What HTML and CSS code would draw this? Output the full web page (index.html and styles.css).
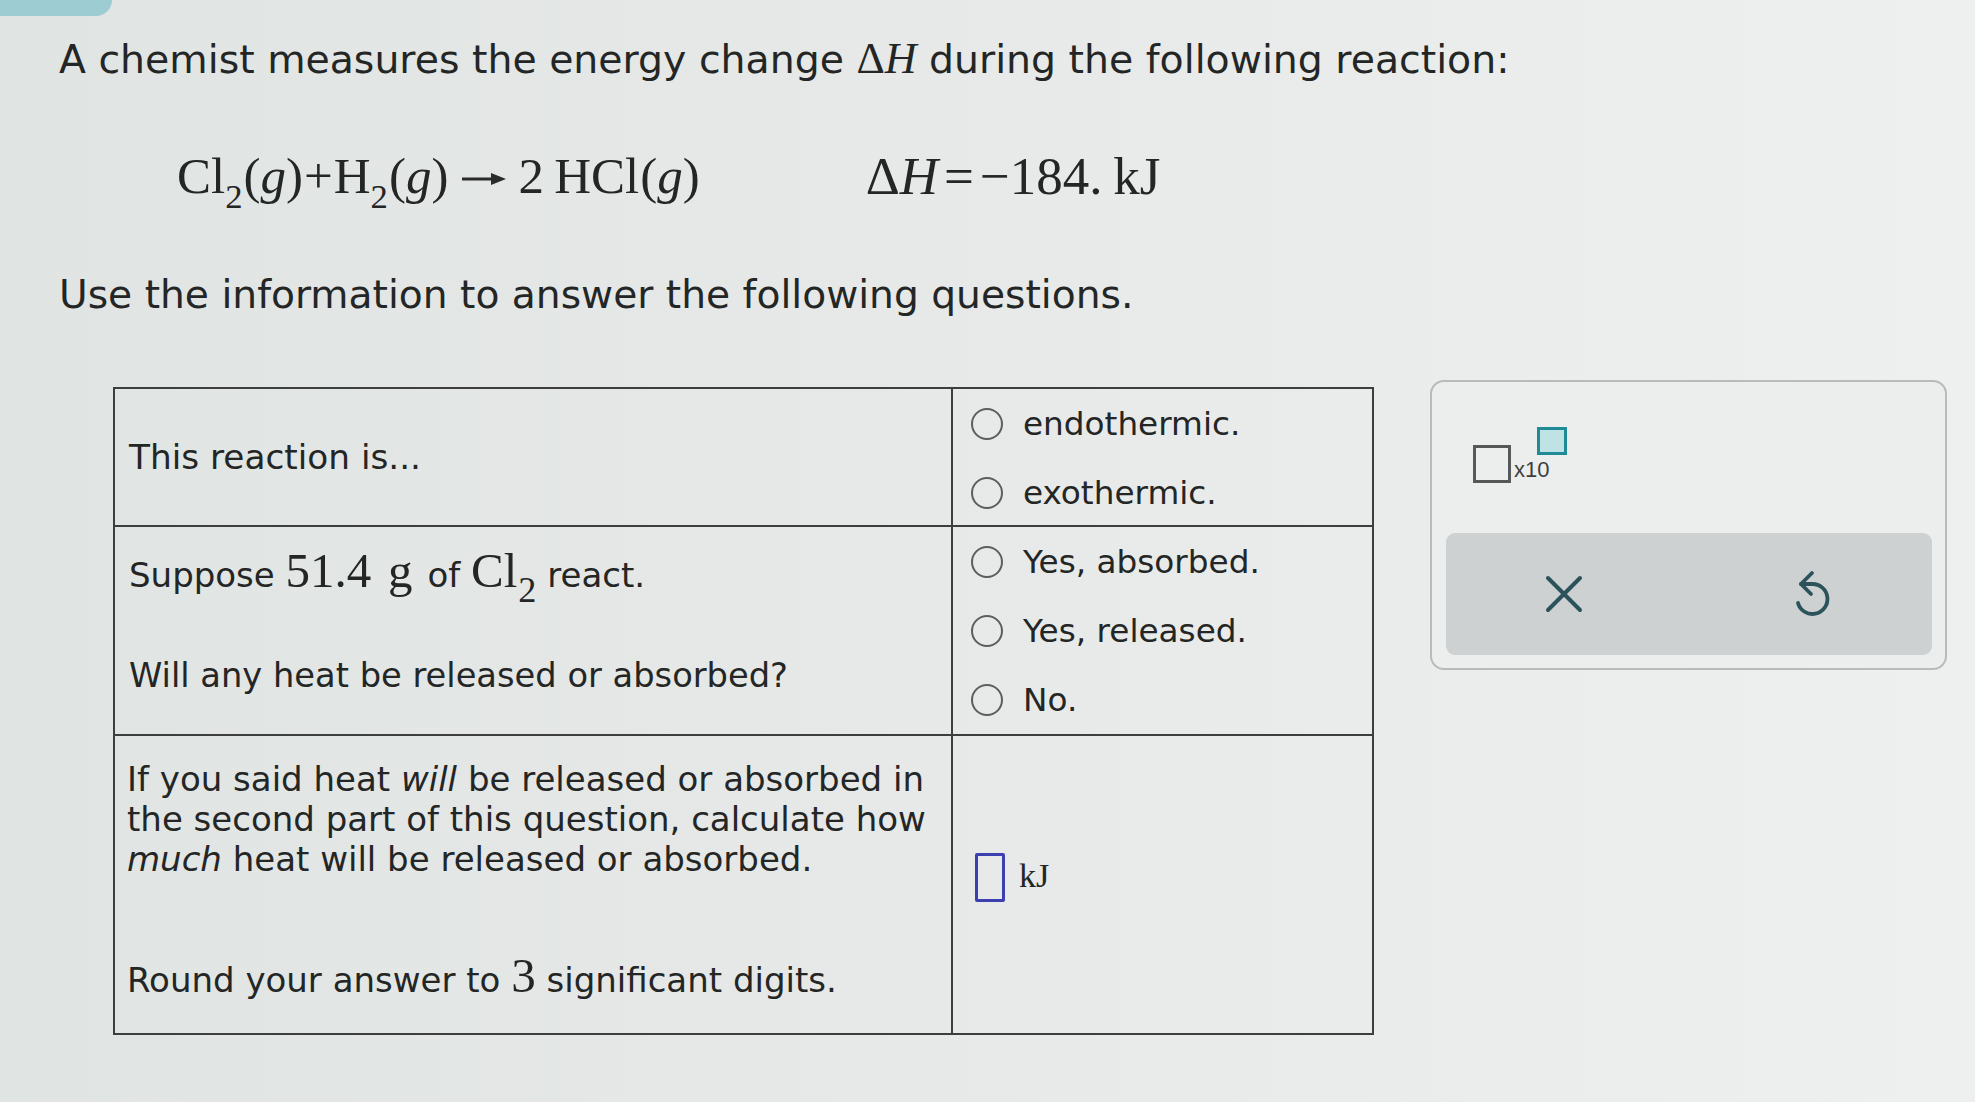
FILE: index.html
```html
<!DOCTYPE html>
<html>
<head>
<meta charset="utf-8">
<link rel="stylesheet" href="styles.css">
</head>
<body>
<div class="tab"></div>
<main class="question">
  <p class="lead">A chemist measures the energy change <span class="math"><span class="up">Δ</span><i>H</i></span> during the following reaction:</p>
  <div class="equation">
    <span class="eq-left">Cl<sub>2</sub><span class="ph">(<i>g</i>)</span><span class="plus">+</span>H<sub>2</sub><span class="ph">(<i>g</i>)</span><svg class="arrow" width="44" height="14" viewBox="0 0 44 14"><line x1="0" y1="7" x2="33" y2="7" stroke="#2a2a2a" stroke-width="3"/><polygon points="29,1 44,7 29,13" fill="#2a2a2a"/></svg>2&#8201;HCl<span class="ph">(<i>g</i>)</span></span>
    <span class="eq-right">Δ<i>H</i><span class="eqsign">=</span>−184.&#8201;kJ</span>
  </div>
  <p class="lead instr">Use the information to answer the following questions.</p>

  <div class="work">
    <div class="grid">
      <div class="cell c1 mid">This reaction is...</div>
      <div class="cell c2">
        <div class="opt"><span class="radio"></span>endothermic.</div>
        <div class="opt"><span class="radio"></span>exothermic.</div>
      </div>
      <div class="cell c1 r2">
        <div class="l-suppose">Suppose <span class="sm">51.4</span> <span class="sm unit-g">g</span> of <span class="sm">Cl<sub>2</sub></span> react.</div>
        <div class="l-will">Will any heat be released or absorbed?</div>
      </div>
      <div class="cell c2">
        <div class="opt"><span class="radio"></span>Yes, absorbed.</div>
        <div class="opt"><span class="radio"></span>Yes, released.</div>
        <div class="opt"><span class="radio"></span>No.</div>
      </div>
      <div class="cell c1 r3">
        <div class="para">
          <div class="ln">If you said heat <i>will</i> be released or absorbed in</div>
          <div class="ln">the second part of this question, calculate how</div>
          <div class="ln"><i>much</i> heat will be released or absorbed.</div>
        </div>
        <div class="round">Round your answer to <span class="sm">3</span> significant digits.</div>
      </div>
      <div class="cell c2 r3b">
        <span class="answer"></span><span class="unit">kJ</span>
      </div>
    </div>

    <aside class="panel">
      <div class="sci">
        <span class="base"></span><span class="x10">x10</span><span class="expo"></span>
      </div>
      <div class="bar">
        <div class="btn">
          <svg class="ico-x" width="38" height="38" viewBox="0 0 38 38"><path d="M3 3 L35 35 M35 3 L3 35" stroke="#2c525b" stroke-width="4" fill="none" stroke-linecap="round"/></svg>
        </div>
        <div class="btn">
          <svg class="ico-undo" width="40" height="48" viewBox="0 0 40 48"><path d="M8 14 L19 14 A15 15 0 1 1 5 33" stroke="#2c525b" stroke-width="3.8" fill="none" stroke-linecap="round"/><path d="M19 3 L8 14 L18 24" stroke="#2c525b" stroke-width="3.8" fill="none" stroke-linecap="round" stroke-linejoin="round"/></svg>
        </div>
      </div>
    </aside>
  </div>
</main>
</body>
</html>
```

FILE: styles.css
```css
* { box-sizing: border-box; }
html, body { margin: 0; padding: 0; }
body {
  width: 1975px;
  height: 1102px;
  overflow: hidden;
  background: linear-gradient(90deg, #e0e4e2 0%, #e6e9e7 45%, #eef0ef 100%);
  font-family: "DejaVu Sans", Verdana, sans-serif;
  color: #242626;
}
.tab {
  width: 112px;
  height: 16px;
  background: #9dcdd3;
  border-radius: 0 0 24px 0;
}
.question { padding-left: 59px; }
.lead {
  margin: 20px 0 0 0;
  font-size: 39.4px;
  line-height: 46px;
  white-space: nowrap;
}
.math { font-family: "Liberation Serif", "Times New Roman", serif; font-size: 44px; }
.math i { font-style: italic; }
.equation {
  margin-top: 64px;
  height: 60px;
  display: flex;
  align-items: center;
  padding-left: 118px;
  font-family: "Liberation Serif", "Times New Roman", serif;
  font-size: 51px;
  line-height: 60px;
  white-space: nowrap;
}
.equation sub, .sm sub { font-size: 0.68em; vertical-align: -0.42em; line-height: 0; }
.sm sub { font-size: 0.74em; margin-left: 1px; }
.equation i { font-style: italic; }
.ph { margin-left: 1px; }
.plus { margin: 0 1px; }
.arrow { margin: 0 12px 0 14px; vertical-align: middle; position: relative; top: -2px; }
.eq-right { margin-left: 166px; font-size: 53px; }
.eqsign { margin: 0 6px; }
.instr { margin-top: 66px; font-size: 39.2px; }

.work {
  margin-top: 62px;
  display: flex;
  align-items: flex-start;
}
.grid {
  margin-left: 54px;
  margin-top: 7px;
  display: grid;
  grid-template-columns: 838px 421px;
  grid-template-rows: 138px 209px 299px;
  border-top: 2px solid #3d3f3f;
  border-left: 2px solid #3d3f3f;
}
.cell {
  border-right: 2px solid #3d3f3f;
  border-bottom: 2px solid #3d3f3f;
}
.c1 {
  padding-left: 14px;
  font-size: 34px;
  white-space: nowrap;
}
.c1.mid { display: flex; align-items: center; line-height: 40px; font-size: 34.3px; }
.r2 { padding-top: 19px; }
.l-suppose { line-height: 50px; }
.sm { font-family: "Liberation Serif", "Times New Roman", serif; font-size: 49px; line-height: 1; }
.unit-g { margin-left: 6px; margin-right: 4px; }
.l-will { margin-top: 56px; line-height: 40px; font-size: 33.7px; }
.r3 { padding-top: 23px; padding-left: 12px; }
.para { line-height: 40px; }
.ln { height: 32px; line-height: 40px; margin-bottom: 0; }
.ln + .ln { margin-top: 8px; }
.round { margin-top: 80px; line-height: 44px; }
.c2 { padding-left: 18px; }
.opt {
  height: 69px;
  display: flex;
  align-items: center;
  font-size: 32.7px;
}
.radio {
  width: 32px;
  height: 32px;
  border: 2px solid #5c5e5e;
  border-radius: 50%;
  margin-right: 20px;
  flex: none;
}
.r3b { padding-top: 117px; padding-left: 22px; display: flex; align-items: flex-start; }
.answer {
  width: 30px;
  height: 49px;
  border: 3px solid #3b3fb0;
  border-radius: 2px;
  flex: none;
}
.unit {
  margin-left: 14px;
  margin-top: 3px;
  font-family: "Liberation Serif", "Times New Roman", serif;
  font-size: 34px;
  line-height: 40px;
}

.panel {
  margin-left: 56px;
  width: 517px;
  height: 290px;
  border: 2px solid #b7bbbb;
  border-radius: 14px;
  background: #eceeed;
  padding: 45px 13px 13px 14px;
}
.sci {
  display: flex;
  align-items: flex-end;
  height: 56px;
  margin-left: 27px;
}
.base {
  width: 38px;
  height: 38px;
  border: 3px solid #555858;
  flex: none;
}
.x10 {
  font-family: "Liberation Sans", Arial, sans-serif;
  font-size: 22px;
  line-height: 22px;
  color: #3c3f3f;
  margin-left: 3px;
  margin-bottom: 2px;
}
.expo {
  align-self: flex-start;
  width: 30px;
  height: 28px;
  border: 3px solid #1f8b97;
  background: #bfe2e4;
  margin-left: -12px;
  flex: none;
}
.bar {
  margin-top: 50px;
  height: 122px;
  background: #cdd1d1;
  border-radius: 9px;
  display: flex;
}
.btn {
  flex: 1;
  display: flex;
  align-items: center;
  justify-content: center;
}
.ico-x { margin-right: 8px; }
.ico-undo { margin-left: 4px; }
```
